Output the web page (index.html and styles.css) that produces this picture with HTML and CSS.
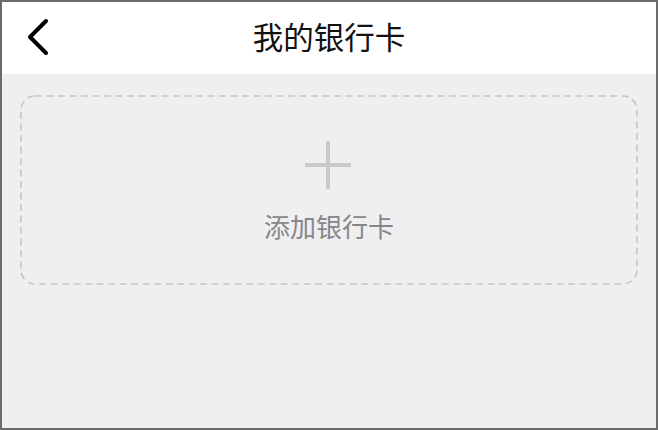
FILE: index.html
```html
<!DOCTYPE html>
<html lang="zh">
<head>
<meta charset="utf-8">
<link rel="stylesheet" href="styles.css">
</head>
<body>
<div class="frame">
  <header class="nav">
    <button class="back" aria-label="返回">
      <svg width="24" height="38" viewBox="0 0 24 38"><path d="M20 3 L4 19 L20 35" fill="none" stroke="#000" stroke-width="4" stroke-linecap="round" stroke-linejoin="round"/></svg>
    </button>
    <h1 class="title">我的银行卡</h1>
  </header>
  <main class="content">
    <div class="add-card">
      <svg class="dash" width="618" height="190" viewBox="0 0 618 190"><rect x="1" y="1" width="616" height="188" rx="14" ry="14" fill="none" stroke="#c6c6c6" stroke-width="1.6" stroke-dasharray="7 4.5"/></svg>
      <svg class="plus" width="46" height="48" viewBox="0 0 46 48"><path d="M23 0 V48 M0 24 H46" stroke="#c9c9c9" stroke-width="4"/></svg>
      <span class="add-label">添加银行卡</span>
    </div>
  </main>
</div>
</body>
</html>
```
FILE: styles.css
```css
html, body { margin: 0; padding: 0; }
body { font-family: "Noto Sans CJK SC", "Noto Sans", sans-serif; }
.frame {
  width: 658px; height: 430px; box-sizing: border-box;
  border: 2px solid #6b6b6b;
  background: #efeff2;
  display: flex; flex-direction: column;
}
.nav {
  height: 72px; background: #fff; position: relative;
  display: flex; align-items: center; justify-content: center;
  flex-shrink: 0;
}
.back {
  position: absolute; left: 24px; top: 16px;
  border: 0; background: none; padding: 0; display: flex;
}
.title { margin: 0 0 4px; font-size: 30.5px; font-weight: 400; color: #111; line-height: 1; }
.content { flex: 1; padding: 21px 18px 0; }
.add-card {
  position: relative;
  height: 190px; box-sizing: border-box;
  display: flex; flex-direction: column; align-items: center;
  padding-top: 46px;
}
.dash { position: absolute; left: 0; top: 0; }
.plus { display: block; margin-left: -2px; }
.add-label { margin-top: 19px; font-size: 26px; color: #878787; line-height: 36px; }
```
